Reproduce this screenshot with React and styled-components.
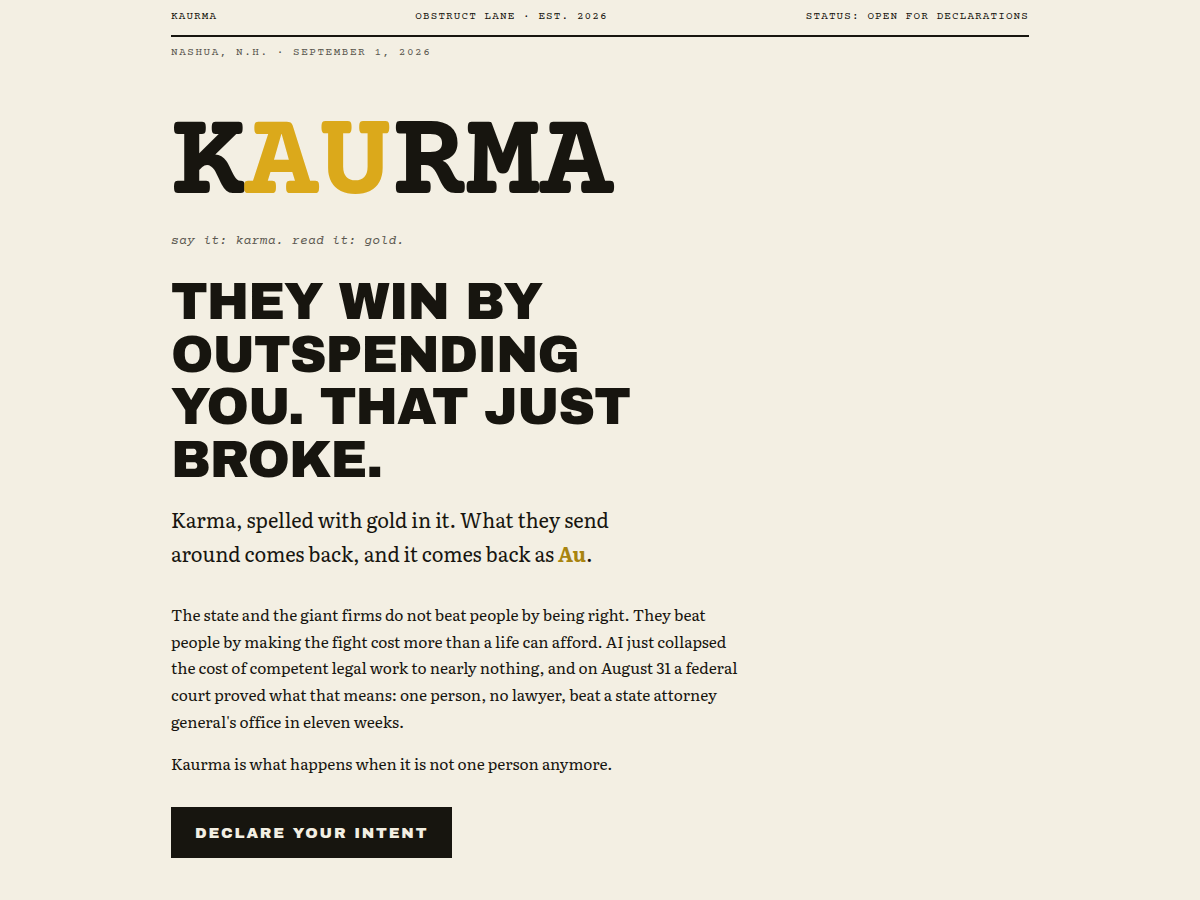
import styled, { createGlobalStyle } from "styled-components";

const mono = `"Courier Prime", "Courier New", FreeMono, monospace`;
const serif = `Literata, "Liberation Serif", serif`;
const grotesk = `"Archivo Black", "Liberation Sans", Arial, sans-serif`;

const GlobalStyle = createGlobalStyle`
  html, body {
    margin: 0;
    padding: 0;
    background: #f3efe3;
    color: #17150f;
  }
  * {
    box-sizing: border-box;
  }
`;

export default function App() {
  return (
    <>
      <GlobalStyle />
      <Page>
        <TopBar>
          <span>KAURMA</span>
          <span>OBSTRUCT LANE · EST. 2026</span>
          <span>STATUS: OPEN FOR DECLARATIONS</span>
        </TopBar>
        <Dateline>NASHUA, N.H. · SEPTEMBER 1, 2026</Dateline>

        <Hero>
          <Wordmark>
            K<Gold>AU</Gold>RMA
          </Wordmark>
          <Tagline>say it: karma. read it: gold.</Tagline>
          <Headline>
            THEY WIN BY OUTSPENDING YOU. THAT JUST BROKE.
          </Headline>
          <Lead>
            Karma, spelled with gold in it. What they send around comes back,
            and it comes back as <Au>Au</Au>.
          </Lead>
          <Body>
            The state and the giant firms do not beat people by being right.
            They beat people by making the fight cost more than a life can
            afford. AI just collapsed the cost of competent legal work to nearly
            nothing, and on August 31 a federal court proved what that means:
            one person, no lawyer, beat a state attorney general's office in
            eleven weeks.
          </Body>
          <Body>Kaurma is what happens when it is not one person anymore.</Body>
          <DeclareButton type="button">DECLARE YOUR INTENT</DeclareButton>
        </Hero>
      </Page>
    </>
  );
}

const Page = styled.div`
  width: 858px;
  margin: 0 auto;
  padding-bottom: 40px;
`;

const TopBar = styled.header`
  display: flex;
  justify-content: space-between;
  align-items: center;
  padding: 10px 0 12px;
  border-bottom: 2px solid #17150f;
  font-family: ${mono};
  font-size: 11px;
  line-height: 13px;
  letter-spacing: 0.1em;
`;

const Dateline = styled.div`
  margin-top: 9px;
  font-family: ${mono};
  font-size: 11px;
  line-height: 13px;
  letter-spacing: 0.14em;
  color: #5a574f;
`;

const Hero = styled.main`
  padding-top: 46px;
`;

const Wordmark = styled.h1`
  margin: 0;
  font-family: ${mono};
  font-weight: 700;
  font-size: 123px;
  line-height: 1;
  letter-spacing: 0;
`;

const Gold = styled.span`
  color: #dba91b;
`;

const Tagline = styled.p`
  margin: 4px 0 0;
  font-family: ${mono};
  font-style: italic;
  font-size: 13px;
  line-height: 18px;
  letter-spacing: 0.02em;
  color: #5a574f;
`;

const Headline = styled.h2`
  margin: 26px 0 0;
  max-width: 480px;
  font-family: ${grotesk};
  font-weight: 400;
  font-size: 51px;
  line-height: 52.5px;
  letter-spacing: -0.02em;
`;

const Lead = styled.p`
  margin: 16px 0 0;
  max-width: 450px;
  font-family: ${serif};
  font-size: 20px;
  line-height: 34px;
`;

const Au = styled.strong`
  color: #a8840f;
  font-weight: 700;
`;

const Body = styled.p`
  margin: 32px 0 0;
  max-width: 582px;
  font-family: ${serif};
  font-size: 15.5px;
  line-height: 26.7px;
  font-variant-ligatures: none;

  & + & {
    margin-top: 15px;
  }
`;

const DeclareButton = styled.button`
  display: inline-block;
  margin-top: 30px;
  padding: 0 24px;
  height: 51px;
  border: none;
  background: #17150f;
  color: #f3efe3;
  font-family: ${grotesk};
  font-size: 15px;
  letter-spacing: 0.12em;
  cursor: pointer;
`;
